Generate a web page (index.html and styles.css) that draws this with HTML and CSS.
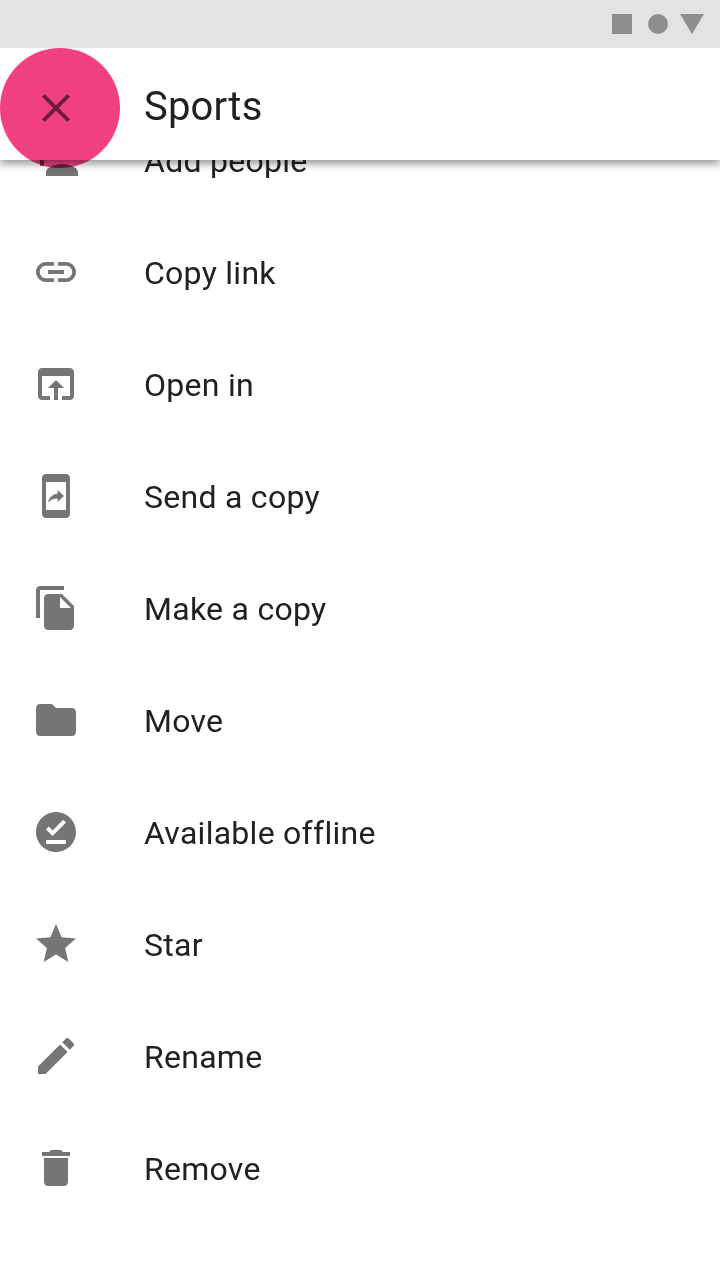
FILE: index.html
```
<!DOCTYPE html>
<html lang="en"><head><title>Sports</title><meta charset="utf-8">
<link rel="stylesheet" href="styles.css"></head><body>

<div class="status">
	<svg width="108" height="48" viewBox="0 0 108 48">
		<rect x="0" y="14" width="20" height="20"/>
		<circle cx="46" cy="24" r="10"/>
		<path d="M68 14h24L80 34z"/>
	</svg>
</div>

<header class="bar">
	<button class="close" aria-label="Close">
		<svg class="icon" viewBox="0 0 24 24"><path d="M19 6.41L17.59 5 12 10.59 6.41 5 5 6.41 10.59 12 5 17.59 6.41 19 12 13.41 17.59 19 19 17.59 13.41 12z"/></svg>
	</button>
	<h1>Sports</h1>
	<span class="ripple"></span>
</header>

<ul class="menu">
	<li><svg class="icon" viewBox="0 0 24 24"><path d="M15 12c2.21 0 4-1.79 4-4s-1.79-4-4-4-4 1.79-4 4 1.79 4 4 4zm-9-2V7H4v3H1v2h3v3h2v-3h3v-2H6zm9 4c-2.67 0-8 1.34-8 4v2h16v-2c0-2.66-5.33-4-8-4z"/></svg><span>Add people</span></li>
	<li><svg class="icon" viewBox="0 0 24 24"><path d="M3.9 12c0-1.71 1.39-3.1 3.1-3.1h4V7H7c-2.76 0-5 2.24-5 5s2.24 5 5 5h4v-1.9H7c-1.71 0-3.1-1.39-3.1-3.1zM8 13h8v-2H8v2zm9-6h-4v1.9h4c1.71 0 3.1 1.39 3.1 3.1s-1.39 3.1-3.1 3.1h-4V17h4c2.76 0 5-2.24 5-5s-2.24-5-5-5z"/></svg><span>Copy link</span></li>
	<li><svg class="icon" viewBox="0 0 24 24"><path d="M19 4H5c-1.11 0-2 .9-2 2v12c0 1.1.89 2 2 2h4v-2H5V8h14v10h-4v2h4c1.1 0 2-.9 2-2V6c0-1.1-.89-2-2-2zm-7 6l-4 4h3v6h2v-6h3l-4-4z"/></svg><span>Open in</span></li>
	<li><svg class="icon" viewBox="0 0 24 24"><path d="M17 1H7c-1.1 0-2 .9-2 2v18c0 1.1.9 2 2 2h10c1.1 0 1.99-.9 1.99-2V3c0-1.1-.89-2-1.99-2zm0 18H7V5h10v14zm-4.2-5.76v1.75L16 12l-3.2-2.98v1.7c-3.11.43-4.35 2.56-4.8 4.7 1.11-1.5 2.58-2.18 4.8-2.18z"/></svg><span>Send a copy</span></li>
	<li><svg class="icon" viewBox="0 0 24 24"><path d="M16 1H4c-1.1 0-2 .9-2 2v14h2V3h12V1zm-1 4l6 6v10c0 1.1-.9 2-2 2H7.99C6.89 23 6 22.1 6 21l.01-14c0-1.1.89-2 1.99-2h7zm-1 7h5.5L14 6.5V12z"/></svg><span>Make a copy</span></li>
	<li><svg class="icon" viewBox="0 0 24 24"><path d="M10 4H4c-1.1 0-1.99.9-1.99 2L2 18c0 1.1.9 2 2 2h16c1.1 0 2-.9 2-2V8c0-1.1-.9-2-2-2h-8l-2-2z"/></svg><span>Move</span></li>
	<li><svg class="icon" viewBox="0 0 24 24"><path d="M12 2C6.5 2 2 6.5 2 12s4.5 10 10 10 10-4.5 10-10S17.5 2 12 2zm5 16H7v-2h10v2zm-6.7-4L7 10.7l1.4-1.4 1.9 1.9 5.3-5.3L17 7.3 10.3 14z"/></svg><span>Available offline</span></li>
	<li><svg class="icon" viewBox="0 0 24 24"><path d="M12 17.27L18.18 21l-1.64-7.03L22 9.24l-7.19-.61L12 2 9.19 8.63 2 9.24l5.46 4.73L5.82 21z"/></svg><span>Star</span></li>
	<li><svg class="icon" viewBox="0 0 24 24"><path d="M3 17.25V21h3.75L17.81 9.94l-3.75-3.75L3 17.25zM20.71 7.04c.39-.39.39-1.02 0-1.41l-2.34-2.34c-.39-.39-1.02-.39-1.41 0l-1.83 1.83 3.75 3.75 1.83-1.83z"/></svg><span>Rename</span></li>
	<li><svg class="icon" viewBox="0 0 24 24"><path d="M6 19c0 1.1.9 2 2 2h8c1.1 0 2-.9 2-2V7H6v12zM19 4h-3.5l-1-1h-5l-1 1H5v2h14V4z"/></svg><span>Remove</span></li>
</ul>

</body></html>
```
FILE: styles.css
```
body { margin: 0; height: 1280px; overflow: hidden; background: #fff; color: #212121;
	font-family: Roboto, "Liberation Sans", sans-serif; }
.status { display: flex; justify-content: flex-end; height: 48px; background: #e3e3e3; }
.status svg { fill: #8e8e8e; }
/* no z-index on .bar itself, so the ripple blends with the list too */
.bar { position: relative; display: flex; align-items: center; height: 112px;
	padding: 8px 32px 0; box-sizing: border-box; }
.bar:before { content: ""; position: absolute; z-index: 1; top: 0; right: 0; bottom: 0; left: 0;
	background: #fff; box-shadow: 0 4px 8px rgba(0,0,0,.4); clip-path: inset(0 0 -20px 0); }
.close { position: relative; z-index: 2; padding: 0; border: 0; background: none; }
h1 { position: relative; z-index: 2; margin: 0 0 2px 64px; font-size: 40px; font-weight: 400;
	line-height: 48px; letter-spacing: .2px; }
.ripple { position: absolute; z-index: 3; top: 0; left: 0; width: 120px; height: 120px;
	border-radius: 50%; background: #f04080; mix-blend-mode: multiply; }
.icon { display: block; flex: none; width: 48px; height: 48px; fill: #757575; }
.menu { margin: -56px 0 0; padding: 0; list-style: none; }
.menu li { display: flex; align-items: center; gap: 64px; height: 112px; padding: 0 32px;
	font-size: 32px; letter-spacing: .27px; }
.menu span { padding-top: 2px; }
```
